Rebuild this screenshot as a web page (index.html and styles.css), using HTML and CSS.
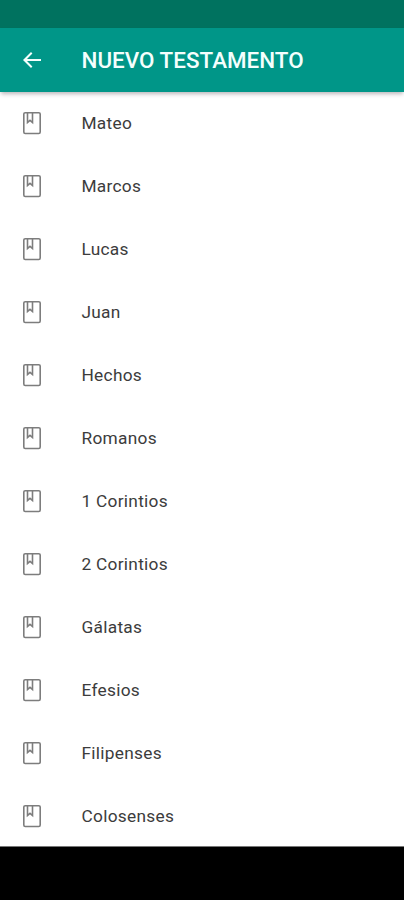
FILE: index.html
```
<!DOCTYPE html>
<html lang="es">
<head>
<meta charset="utf-8">
<title>Nuevo Testamento</title>
<link rel="stylesheet" href="styles.css">
</head>
<body>
<svg class="defs" width="0" height="0"><symbol id="book" viewBox="0 0 26 26"><rect x="4.800" y="2.700" width="16.400" height="20.800" rx="1.400"/><path d="M8.500 3v9.500l2.500-2.100 2.500 2.100V3"/></symbol></svg>
<div class="status"></div>
<header class="bar">
<svg class="back" viewBox="0 0 24 24"><path d="M21 11H7l5.400-5.500L11 4l-8 8 8 8 1.400-1.500L7 13h14z"/></svg>
<h1>NUEVO TESTAMENTO</h1>
</header>
<ul class="list">
<li><svg><use href="#book"/></svg><span>Mateo</span></li>
<li><svg><use href="#book"/></svg><span>Marcos</span></li>
<li><svg><use href="#book"/></svg><span>Lucas</span></li>
<li><svg><use href="#book"/></svg><span>Juan</span></li>
<li><svg><use href="#book"/></svg><span>Hechos</span></li>
<li><svg><use href="#book"/></svg><span>Romanos</span></li>
<li><svg><use href="#book"/></svg><span>1 Corintios</span></li>
<li><svg><use href="#book"/></svg><span>2 Corintios</span></li>
<li><svg><use href="#book"/></svg><span>Gálatas</span></li>
<li><svg><use href="#book"/></svg><span>Efesios</span></li>
<li><svg><use href="#book"/></svg><span>Filipenses</span></li>
<li><svg><use href="#book"/></svg><span>Colosenses</span></li>
</ul>
<div class="nav"></div>
</body>
</html>
```
FILE: styles.css
```
* { box-sizing: border-box; }
body { margin: 0; height: 900px; overflow: hidden; display: flex; flex-direction: column; background: #fff; font-family: Roboto, sans-serif; }
.defs { display: none; }
.status { height: 28px; flex: none; background: #00725f; }
.bar { height: 64px; flex: none; display: flex; align-items: center; padding-left: 20px; gap: 37.500px; background: #009688; color: #f4fffd; box-shadow: 0 3px 4px -1px rgba(60,50,60,.35); }
.back { width: 24px; height: 24px; fill: #f4fffd; }
h1 { margin: 0; font-size: 22.400px; font-weight: 500; letter-spacing: .02px; }
.list { height: 755px; flex: none; overflow: hidden; margin: 0; padding: 0; list-style: none; border-bottom: 1px solid #777; }
.list li { height: 63px; display: flex; align-items: center; padding: 0 0 2px 19px; gap: 36.500px; font-size: 17.300px; letter-spacing: .28px; color: #3c3c3c; }
.list svg { width: 26px; height: 26px; fill: none; stroke: #7d7d7d; stroke-width: 1.600; }
.nav { flex: 1; background: #000; }
```
